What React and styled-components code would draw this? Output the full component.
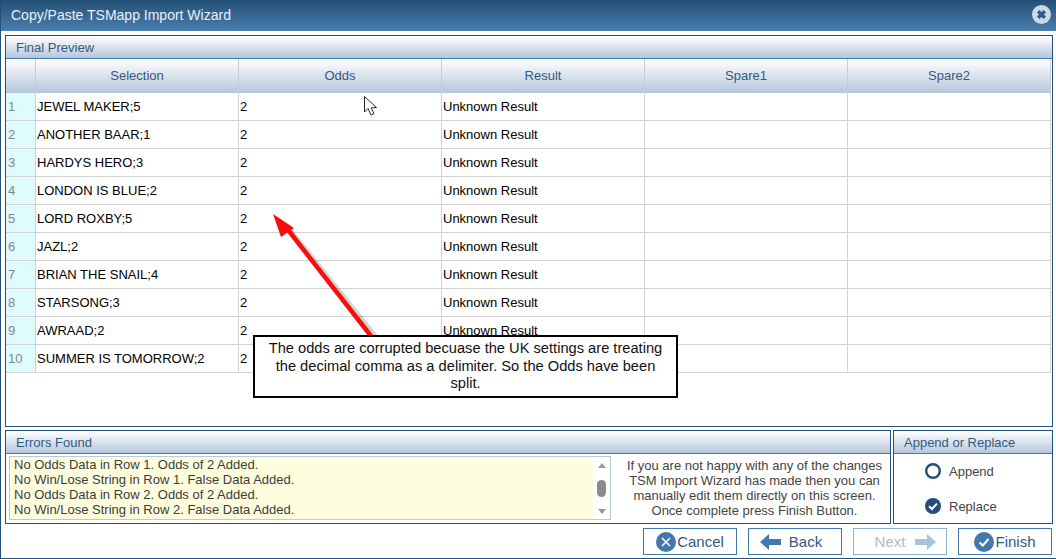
import styled, { createGlobalStyle } from "styled-components";

const GlobalStyle = createGlobalStyle`
  html, body {
    margin: 0;
    padding: 0;
    background: #fff;
    overflow: hidden;
  }
  body {
    font-family: "Liberation Sans", Arial, sans-serif;
  }
`;

const HEADER_GRADIENT = "linear-gradient(to bottom, #ffffff 0%, #e6ebf3 35%, #b4c6dc 100%)";

const Wizard = styled.div`
  position: relative;
  width: 1056px;
  height: 559px;
  box-sizing: border-box;
  border-left: 1px solid #234f78;
  border-bottom: 1px solid #234f78;
  display: flex;
  flex-direction: column;
  background: #fff;
  overflow: hidden;
`;

const TitleBar = styled.div`
  height: 31px;
  flex: none;
  box-sizing: border-box;
  display: flex;
  align-items: center;
  justify-content: space-between;
  padding: 0 5px 2px 10px;
  background: linear-gradient(to bottom, #234f76 0%, #4a7fae 100%);
  color: #e9f0f6;
  font-size: 14px;
`;

const Body = styled.div`
  flex: 1;
  display: flex;
  flex-direction: column;
  padding: 4px 3px 0 4px;
  min-height: 0;
`;

const Panel = styled.div`
  box-sizing: border-box;
  border: 1px solid #234f78;
  display: flex;
  flex-direction: column;
  background: #fff;
`;

const PreviewPanel = styled(Panel)`
  height: 392px;
  flex: none;
`;

const PanelHeader = styled.div`
  height: 23px;
  flex: none;
  box-sizing: border-box;
  padding: 0 10px;
  line-height: 23px;
  font-size: 13px;
  color: #34597f;
  background: ${HEADER_GRADIENT};
  border-bottom: 1px solid #4179ad;
`;

const Grid = styled.div`
  display: grid;
  grid-template-columns: 30px repeat(5, 203px);
`;

const HeadCell = styled.div`
  height: 34px;
  box-sizing: border-box;
  text-align: center;
  line-height: 33px;
  font-size: 13px;
  color: #34597f;
  background: ${HEADER_GRADIENT};
  border-right: 1px solid #c8ccd0;
`;

const IndexCell = styled.div`
  height: 28px;
  box-sizing: border-box;
  padding-left: 2px;
  line-height: 27px;
  font-size: 13px;
  color: #7d8a8a;
  background: #e0fbfd;
  border-right: 1px solid #d2d2d2;
  border-bottom: 1px solid #d2d2d2;
`;

const Cell = styled.div`
  height: 28px;
  box-sizing: border-box;
  padding-left: 1px;
  line-height: 27px;
  font-size: 13px;
  color: #000;
  white-space: nowrap;
  border-right: 1px solid #d2d2d2;
  border-bottom: 1px solid #d2d2d2;
`;

const BottomRow = styled.div`
  display: flex;
  gap: 2px;
  margin-top: 3px;
  height: 94px;
  flex: none;
`;

const ErrorsPanel = styled(Panel)`
  width: 886px;
`;

const ModePanel = styled(Panel)`
  width: 160px;
`;

const ErrorsBody = styled.div`
  flex: 1;
  display: flex;
  padding: 2px 0 3px 3px;
  min-height: 0;
`;

const ErrorList = styled.div`
  width: 602px;
  flex: none;
  box-sizing: border-box;
  display: flex;
  border: 1px solid #b5cbe0;
  height: 64px;
`;

const ErrorLines = styled.div`
  flex: 1;
  background: #fefede;
  padding: 0 0 0 4px;
  font-size: 13px;
  line-height: 15px;
  color: #3c3c3c;
  white-space: nowrap;
  overflow: hidden;
`;

const ScrollTrack = styled.div`
  width: 17px;
  flex: none;
  background: #fff;
  display: flex;
  flex-direction: column;
  align-items: center;
  justify-content: space-between;
  padding: 6px 0 5px;
  box-sizing: border-box;
`;

const ScrollThumb = styled.div`
  width: 9px;
  height: 17px;
  border-radius: 5px;
  background: #8b8b8b;
`;

const ScrollArrow = styled.div`
  width: 0;
  height: 0;
  border-left: 4px solid transparent;
  border-right: 4px solid transparent;
  ${({ $up }) =>
    $up ? "border-bottom: 5px solid #9a9a9a;" : "border-top: 5px solid #9a9a9a;"}
`;

const HelpText = styled.div`
  flex: 1;
  text-align: center;
  font-size: 13px;
  line-height: 15px;
  color: #444;
  padding: 2px 0 0 8px;
  white-space: nowrap;
`;

const ModeList = styled.div`
  flex: 1;
  display: flex;
  flex-direction: column;
  padding: 7px 0 0 31px;
  gap: 15px;
`;

const ModeOption = styled.div`
  display: flex;
  align-items: center;
  gap: 8px;
  height: 20px;
  font-size: 13px;
  color: #444;
`;

const Footer = styled.div`
  flex: 1;
  display: flex;
  justify-content: flex-end;
  gap: 11px;
  padding: 4px 1px 0 0;
`;

const WizardButton = styled.button`
  width: 94px;
  height: 27px;
  box-sizing: border-box;
  border: 1px solid ${({ disabled }) => (disabled ? "#8fb2d1" : "#4179ad")};
  background: #fff;
  padding: 0 ${({ $right }) => $right || 0}px 0 ${({ $left }) => $left || 0}px;
  display: flex;
  align-items: center;
  justify-content: center;
  gap: ${({ $gap }) => $gap}px;
  font-family: inherit;
  font-size: 15px;
  color: ${({ disabled }) => (disabled ? "#b0bcc8" : "#34597f")};
`;

const Callout = styled.div`
  position: absolute;
  left: 252px;
  top: 335px;
  width: 425px;
  height: 63px;
  box-sizing: border-box;
  border: 2px solid #000;
  background: #fff;
  padding: 3px 10px 0;
  text-align: center;
  font-size: 14.67px;
  line-height: 17.5px;
  color: #111;
`;

const Overlay = styled.svg`
  position: absolute;
  left: 0;
  top: 0;
  pointer-events: none;
`;

const columns = ["Selection", "Odds", "Result", "Spare1", "Spare2"];

const rows = [
  "JEWEL MAKER;5",
  "ANOTHER BAAR;1",
  "HARDYS HERO;3",
  "LONDON IS BLUE;2",
  "LORD ROXBY;5",
  "JAZL;2",
  "BRIAN THE SNAIL;4",
  "STARSONG;3",
  "AWRAAD;2",
  "SUMMER IS TOMORROW;2",
];

const errors = [
  "No Odds Data in Row 1. Odds of 2 Added.",
  "No Win/Lose String in Row 1. False Data Added.",
  "No Odds Data in Row 2. Odds of 2 Added.",
  "No Win/Lose String in Row 2. False Data Added.",
];

const CloseIcon = () => (
  <svg width="19" height="19" viewBox="0 0 20 20">
    <circle cx="10" cy="10" r="10" fill="#c9d9e6" />
    <path d="M6.5 6.5 L13.5 13.5 M13.5 6.5 L6.5 13.5" stroke="#2c5d88" strokeWidth="3.6" />
  </svg>
);

const CircleIcon = ({ check }) => (
  <svg width="20" height="20" viewBox="0 0 20 20">
    <circle cx="10" cy="10" r="10" fill="#4179ad" />
    {check ? (
      <path d="M5.5 10.5 L8.8 13.5 L14.5 7" fill="none" stroke="#fff" strokeWidth="2" />
    ) : (
      <path d="M6 6 L14 14 M14 6 L6 14" stroke="#fff" strokeWidth="1.6" />
    )}
  </svg>
);

const ArrowIcon = ({ left, color }) => (
  <svg width="21" height="16" viewBox="0 0 21 16">
    <path
      d={left ? "M0 8 L9 0 L9 5 L21 5 L21 11 L9 11 L9 16 Z" : "M21 8 L12 0 L12 5 L0 5 L0 11 L12 11 L12 16 Z"}
      fill={color}
    />
  </svg>
);

const RadioIcon = ({ checked }) => (
  <svg width="16" height="16" viewBox="0 0 16 16">
    {checked ? (
      <>
        <circle cx="8" cy="8" r="8" fill="#234f78" />
        <path d="M4 8.3 L7 11 L12 5.6" fill="none" stroke="#fff" strokeWidth="2" />
      </>
    ) : (
      <circle cx="8" cy="8" r="6.8" fill="#fff" stroke="#234f78" strokeWidth="2.4" />
    )}
  </svg>
);

const Row = ({ index, name }) => (
  <>
    <IndexCell>{index}</IndexCell>
    <Cell>{name}</Cell>
    <Cell>2</Cell>
    <Cell>Unknown Result</Cell>
    <Cell />
    <Cell />
  </>
);

const App = () => {
  return (
    <>
      <GlobalStyle />
      <Wizard>
        <TitleBar>
          Copy/Paste TSMapp Import Wizard
          <CloseIcon />
        </TitleBar>
        <Body>
          <PreviewPanel>
            <PanelHeader>Final Preview</PanelHeader>
            <Grid>
              <HeadCell />
              {columns.map((name) => (
                <HeadCell key={name}>{name}</HeadCell>
              ))}
              {rows.map((name, i) => (
                <Row key={name} index={i + 1} name={name} />
              ))}
            </Grid>
          </PreviewPanel>
          <BottomRow>
            <ErrorsPanel>
              <PanelHeader>Errors Found</PanelHeader>
              <ErrorsBody>
                <ErrorList>
                  <ErrorLines>
                    {errors.map((line) => (
                      <div key={line}>{line}</div>
                    ))}
                  </ErrorLines>
                  <ScrollTrack>
                    <ScrollArrow $up />
                    <ScrollThumb />
                    <ScrollArrow />
                  </ScrollTrack>
                </ErrorList>
                <HelpText>
                  If you are not happy with any of the changes
                  <br />
                  TSM Import Wizard has made then you can
                  <br />
                  manually edit them directly on this screen.
                  <br />
                  Once complete press Finish Button.
                </HelpText>
              </ErrorsBody>
            </ErrorsPanel>
            <ModePanel>
              <PanelHeader>Append or Replace</PanelHeader>
              <ModeList>
                <ModeOption>
                  <RadioIcon />
                  Append
                </ModeOption>
                <ModeOption>
                  <RadioIcon checked />
                  Replace
                </ModeOption>
              </ModeList>
            </ModePanel>
          </BottomRow>
          <Footer>
            <WizardButton $gap={1}>
              <CircleIcon />
              Cancel
            </WizardButton>
            <WizardButton $gap={8} $right={8}>
              <ArrowIcon left color="#4179ad" />
              Back
            </WizardButton>
            <WizardButton $gap={10} $left={11} disabled>
              Next
              <ArrowIcon color="#a9c3da" />
            </WizardButton>
            <WizardButton $gap={1}>
              <CircleIcon check />
              Finish
            </WizardButton>
          </Footer>
        </Body>
        <Overlay width="1056" height="559">
          <path d="M375 337 L288 229" stroke="rgba(0,0,0,0.18)" strokeWidth="5" />
          <path d="M370 336 L284 226" stroke="#f90d0d" strokeWidth="4.5" />
          <path d="M272 214 L293 228 L280 237 Z" fill="#f90d0d" />
          <path
            d="M363.5 96.5 L363.5 112 L367 108.5 L370 115 L373 113.5 L370 108 L375.5 107.5 Z"
            fill="#fff"
            stroke="#222"
            strokeWidth="1"
          />
        </Overlay>
        <Callout>
          The odds are corrupted becuase the UK settings are treating the decimal comma as a
          delimiter. So the Odds have been split.
        </Callout>
      </Wizard>
    </>
  );
};

export default App;
